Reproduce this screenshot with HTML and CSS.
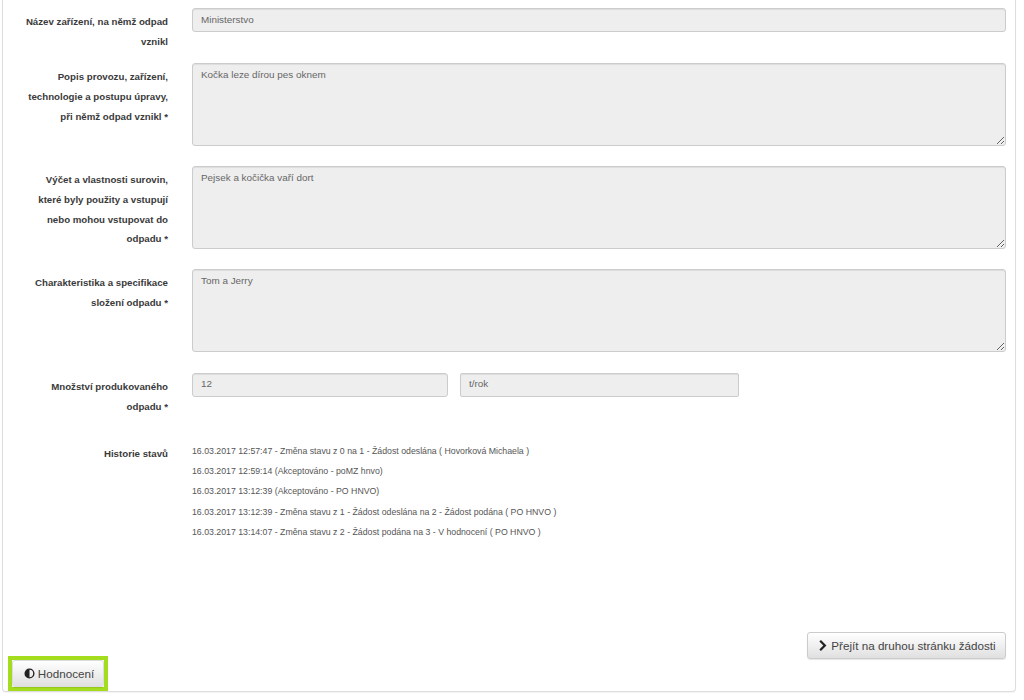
FILE: index.html
```html
<!DOCTYPE html>
<html lang="cs">
<head>
<meta charset="utf-8">
<title>Žádost</title>
<link rel="stylesheet" href="styles.css">
</head>
<body>
<main class="panel">
  <form class="form">
    <div class="row row-first">
      <label class="label">Název zařízení, na němž odpad vznikl</label>
      <div class="field"><input class="control" readonly value="Ministerstvo"></div>
    </div>
    <div class="row">
      <label class="label">Popis provozu, zařízení, technologie a postupu úpravy, při němž odpad vznikl *</label>
      <div class="field"><textarea class="control area" readonly>Kočka leze dírou pes oknem</textarea></div>
    </div>
    <div class="row">
      <label class="label">Výčet a vlastnosti surovin, které byly použity a vstupují nebo mohou vstupovat do odpadu *</label>
      <div class="field"><textarea class="control area" readonly>Pejsek a kočička vaří dort</textarea></div>
    </div>
    <div class="row row-wide">
      <label class="label">Charakteristika a specifikace složení odpadu *</label>
      <div class="field"><textarea class="control area" readonly>Tom a Jerry</textarea></div>
    </div>
    <div class="row row-qty">
      <label class="label">Množství produkovaného odpadu *</label>
      <div class="field pair">
        <input class="control qty" readonly value="12">
        <input class="control unit" readonly value="t/rok">
      </div>
    </div>
    <div class="row">
      <label class="label">Historie stavů</label>
      <ul class="history">
        <li>16.03.2017 12:57:47 - Změna stavu z 0 na 1 - Žádost odeslána ( Hovorková Michaela )</li>
        <li>16.03.2017 12:59:14 (Akceptováno - poMZ hnvo)</li>
        <li>16.03.2017 13:12:39 (Akceptováno - PO HNVO)</li>
        <li>16.03.2017 13:12:39 - Změna stavu z 1 - Žádost odeslána na 2 - Žádost podána ( PO HNVO )</li>
        <li>16.03.2017 13:14:07 - Změna stavu z 2 - Žádost podána na 3 - V hodnocení ( PO HNVO )</li>
      </ul>
    </div>
  </form>
  <div class="next-wrap">
    <button class="btn btn-next" type="button">
      <svg class="icon" viewBox="0 0 12 12" aria-hidden="true"><path d="M2.6 1.7 4.3 0 10.3 6 4.3 12 2.6 10.3 6.9 6z"/></svg>
      Přejít na druhou stránku žádosti
    </button>
  </div>
  <div class="rate-wrap">
    <button class="btn btn-rate" type="button">
      <svg class="icon" viewBox="0 0 12 12" aria-hidden="true"><path fill-rule="evenodd" d="M6 .5a5.5 5.5 0 1 0 0 11 5.5 5.5 0 0 0 0-11zM6 2a4 4 0 0 1 0 8z"/></svg>
      Hodnocení
    </button>
  </div>
</main>
</body>
</html>
```
FILE: styles.css
```css
* { box-sizing: border-box; }
html, body { margin: 0; padding: 0; background: #fff; overflow: hidden; }
body { height: 700px; font-family: "Liberation Sans", Arial, sans-serif; font-size: 10px; color: #333; }
.panel {
  height: 692px;
  margin: 0 8px 0 2px;
  border: 1px solid #ddd;
  border-top: 0;
  border-radius: 0 0 4px 4px;
  box-shadow: 0 1px 1px rgba(0,0,0,.05);
  padding-top: 8px;
}
.form { height: 624px; }
.row { display: flex; margin-bottom: 12px; }
.row-first { margin-bottom: 11.4px; }
.row-wide { margin-bottom: 13px; }
.row-qty { margin-bottom: 23.4px; }
.label {
  width: 165px;
  margin-right: 24px;
  padding: 4px 0 0 20px;
  text-align: right;
  font-size: 9.7px;
  font-weight: 700;
  line-height: 19.8px;
  color: #3a3a3a;
  flex: none;
}
.field { width: 814px; flex: none; }
.pair { display: flex; gap: 12px; }
.control {
  display: block;
  width: 100%;
  height: 24px;
  padding: 0 8px 2px;
  font: 9.9px "Liberation Sans", Arial, sans-serif;
  color: #666;
  background: #eee;
  border: 1px solid #ccc;
  border-radius: 3px;
  box-shadow: inset 0 1px 1px rgba(0,0,0,.075);
  outline: 0;
}
.area { height: 83px; padding: 5px 8px 6px; margin-bottom: 8px; line-height: 12px; }
.qty { width: 256px; }
.unit { width: 279px; border-radius: 2px; }
.history { list-style: none; margin: 0; padding: 1px 0 0; color: #555; font-size: 8.75px; }
.history li { height: 20.2px; line-height: 20.2px; }
.next-wrap { display: flex; justify-content: flex-end; padding-right: 9px; }
.btn {
  display: inline-flex;
  align-items: center;
  justify-content: center;
  height: 27px;
  padding: 0;
  font: 11.65px "Liberation Sans", Arial, sans-serif;
  color: #444;
  background: linear-gradient(to bottom, #fff, #e0e0e0);
  border: 1px solid #ccc;
  border-radius: 3px;
  box-shadow: 0 1px 1px rgba(0,0,0,.1);
  white-space: nowrap;
  gap: 3px;
}
.btn-next { width: 199px; }
.icon { width: 11px; height: 11px; fill: #222; flex: none; }
.rate-wrap { margin: -3px 0 0 5px; width: 100px; height: 35px; border: 4px solid #a4dc1e; }
.btn-rate { width: 92px; padding-left: 2px; border-color: #ddd; }
```
